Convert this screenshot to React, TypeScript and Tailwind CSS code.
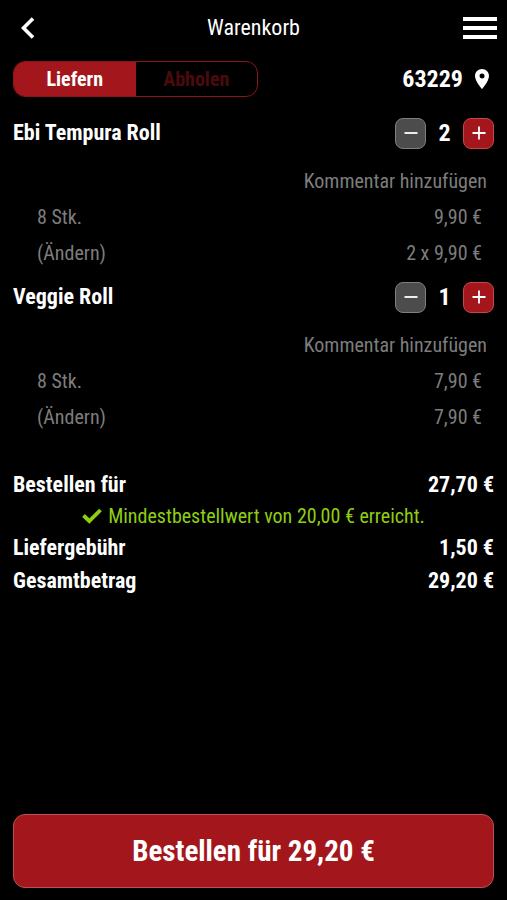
import { useState } from "react";

type CartItem = { id: string; name: string; size: string; price: number; count: number };

const initialItems: CartItem[] = [
  { id: "ebi", name: "Ebi Tempura Roll", size: "8 Stk.", price: 9.9, count: 2 },
  { id: "veggie", name: "Veggie Roll", size: "8 Stk.", price: 7.9, count: 1 },
];

const DELIVERY_FEE = 1.5;
const MIN_ORDER = 20;

const euro = (value: number) => `${value.toFixed(2).replace(".", ",")} €`;

function StepButton({ kind, label, onClick }: { kind: "minus" | "plus"; label: string; onClick: () => void }) {
  return (
    <button
      type="button"
      aria-label={label}
      onClick={onClick}
      className={`flex size-[31px] items-center justify-center rounded-lg border ${kind === "plus" ? "border-[#c4484a] bg-[#a3171c]" : "border-[#808080] bg-[#4c4c4c]"}`}
    >
      <svg viewBox="0 0 14 14" className="size-[14px]" stroke="white" strokeWidth="1.8" aria-hidden="true">
        <path d={kind === "plus" ? "M0.5 7H13.5M7 0.5V13.5" : "M0.5 7H13.5"} />
      </svg>
    </button>
  );
}

export default function App() {
  const [mode, setMode] = useState("deliver");
  const [items, setItems] = useState(initialItems);

  const changeCount = (id: string, delta: number) =>
    setItems(items.map((i) => (i.id === id ? { ...i, count: Math.max(0, i.count + delta) } : i)));

  const subtotal = items.reduce((sum, i) => sum + i.price * i.count, 0);
  const fee = mode === "deliver" ? DELIVERY_FEE : 0;

  return (
    <div className="flex min-h-screen flex-col bg-black px-[13px] pb-3 font-['Roboto_Condensed','Liberation_Sans_Narrow',Roboto,sans-serif] text-[22px] leading-6 text-white">
      <header className="grid h-14 grid-cols-[1fr_auto_1fr] items-center">
        <button type="button" aria-label="Zurück" className="ml-2 w-fit">
          <svg viewBox="0 0 14 22" className="h-[22px] w-[14px]" fill="none" stroke="white" strokeWidth="3.6" aria-hidden="true">
            <path d="M12 1.5L2.5 11L12 20.5" />
          </svg>
        </button>
        <h1>Warenkorb</h1>
        <button type="button" aria-label="Menü" className="-mr-[3px] justify-self-end">
          <svg viewBox="0 0 34 24" className="h-6 w-[34px]" fill="white" aria-hidden="true">
            <path d="M0 1H34V5H0ZM0 10H34V14H0ZM0 19H34V23H0Z" />
          </svg>
        </button>
      </header>

      <div className="mt-[5px] flex items-center justify-between">
        <div className="grid h-9 w-[245px] grid-cols-2 overflow-hidden rounded-xl border border-[#8c161a] text-[20px] font-bold">
          <button type="button" aria-pressed={mode === "deliver"} onClick={() => setMode("deliver")} className={mode === "deliver" ? "bg-[#a3171c] text-white" : "text-[#4b0b0d]"}>
            Liefern
          </button>
          <button type="button" aria-pressed={mode === "pickup"} onClick={() => setMode("pickup")} className={mode === "pickup" ? "bg-[#a3171c] text-white" : "text-[#4b0b0d]"}>
            Abholen
          </button>
        </div>
        <button type="button" className="mr-[5px] flex items-center gap-3 text-[24px] font-bold">
          63229
          <svg viewBox="0 0 14 20" className="h-5 w-[14px]" fill="white" aria-hidden="true">
            <path fillRule="evenodd" d="M7 0C3.1 0 0 3.1 0 7C0 12.2 7 20 7 20S14 12.2 14 7C14 3.1 10.9 0 7 0ZM7 4.5A2.5 2.5 0 1 1 7 9.5A2.5 2.5 0 0 1 7 4.5Z" />
          </svg>
        </button>
      </div>

      <main className="mt-3">
        {items.map((item) => (
          <section key={item.id} className="pb-2">
            <div className="flex h-12 items-center justify-between font-bold">
              <h2>{item.name}</h2>
              <div className="flex items-center">
                <StepButton kind="minus" label={`${item.name} verringern`} onClick={() => changeCount(item.id, -1)} />
                <span className="w-[37px] text-center text-[24px]">{item.count}</span>
                <StepButton kind="plus" label={`${item.name} erhöhen`} onClick={() => changeCount(item.id, 1)} />
              </div>
            </div>
            <div className="flex flex-col text-[20px] text-[#7d7d7d]">
              <button type="button" className="mr-[7px] h-12 self-end">Kommentar hinzufügen</button>
              <div className="ml-6 mr-3 flex justify-between">
                <span>{item.size}</span>
                <span>{euro(item.price)}</span>
              </div>
              <div className="ml-6 mr-3 mt-3 flex justify-between">
                <button type="button">(Ändern)</button>
                <span>{item.count > 1 ? `${item.count} x ${euro(item.price)}` : euro(item.price)}</span>
              </div>
            </div>
          </section>
        ))}
      </main>

      <dl className="mt-[31px] grid grid-cols-[1fr_auto] items-center text-right font-bold leading-[33px]">
        <dt className="text-left">Bestellen für</dt>
        <dd>{euro(subtotal)}</dd>
        {subtotal >= MIN_ORDER && (
          <dd className="col-span-2 flex h-[30px] items-center justify-center gap-[6px] text-[20px] font-normal text-[#8fce12]">
            <svg viewBox="0 0 20 16" className="h-4 w-5" fill="none" stroke="currentColor" strokeWidth="3.8" aria-hidden="true">
              <path d="M1.5 7.5L7.3 13L18.5 2" />
            </svg>
            Mindestbestellwert von {euro(MIN_ORDER)} erreicht.
          </dd>
        )}
        <dt className="text-left">Liefergebühr</dt>
        <dd>{euro(fee)}</dd>
        <dt className="text-left">Gesamtbetrag</dt>
        <dd>{euro(subtotal + fee)}</dd>
      </dl>

      <button type="button" className="mt-auto h-[74px] rounded-xl border border-[#b85052] bg-[#a3171c] text-[29px] font-bold">
        Bestellen für {euro(subtotal + fee)}
      </button>
    </div>
  );
}
